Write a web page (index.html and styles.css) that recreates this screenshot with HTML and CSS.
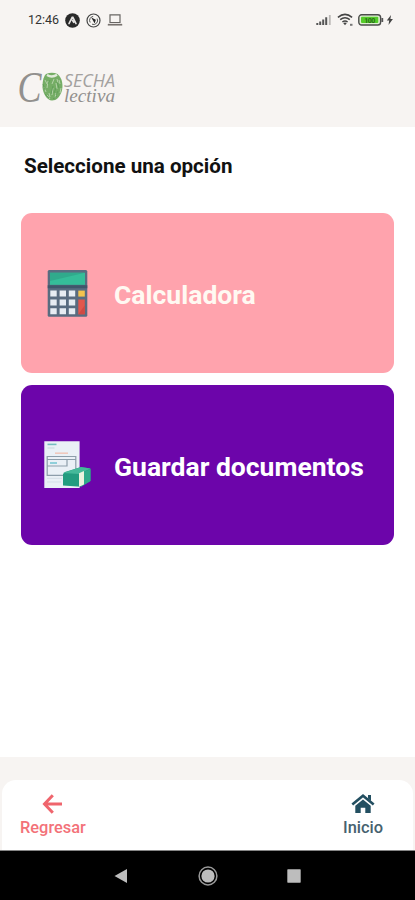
FILE: index.html
```html
<!DOCTYPE html>
<html lang="es">
<head>
<meta charset="utf-8">
<meta name="viewport" content="width=device-width, initial-scale=1">
<title>Cosecha Colectiva</title>
<link rel="stylesheet" href="styles.css">
</head>
<body>
<div class="app">
  <header class="header">
    <div class="status">
      <div class="status-left">
        <span class="clock">12:46</span>
        <svg width="15" height="15" viewBox="0 0 15 15"><circle cx="7.5" cy="7.5" r="7.3" fill="#292929"/><path d="M4 10.6 7.2 4.3h.7L11 10.6M7.5 7.3l1.2 2.1" fill="none" stroke="#e5e3e2" stroke-width="1.6" stroke-linecap="round"/></svg>
        <svg width="15" height="15" viewBox="0 0 15 15"><circle cx="7.5" cy="7.5" r="6.5" fill="#f7f5f3" stroke="#444" stroke-width="1.2"/><path d="M4.2 9.5a4 4 0 0 1 3-6.1M6 11.2a4 4 0 0 0 5.1-5.6" fill="none" stroke="#555" stroke-width="1"/><path d="M5.3 4.5 9.8 6.8 8.7 10.4 7 7.6Z" fill="#222"/></svg>
        <svg width="16" height="14" viewBox="0 0 16 14"><path d="M3 1.8h10v7.7H3Z" fill="none" stroke="#686563" stroke-width="1.2"/><path d="M.8 11.7h14.4" stroke="#77716e" stroke-width="1.7"/></svg>
      </div>
      <div class="status-right">
        <svg width="16" height="12" viewBox="0 0 16 12"><path d="M1.3 11V9M4.2 11V7.6M7.2 11V5.5M10.2 11V3.3" stroke="#555" stroke-width="2"/><path d="M13.8 11V1" stroke="#bbb8b6" stroke-width="1.8"/></svg>
        <svg width="17" height="14" viewBox="0 0 17 14"><path d="M.9 4.3Q8 -1.6 15.1 4.3M3.2 6.7q4.8-3.9 9.6 0M5.4 9q2.6-2 5.2 0" fill="none" stroke="#444" stroke-width="1.5"/><path d="m6.2 10 1.8 2.2L9.8 10Q8 8.9 6.2 10Z" fill="#444"/><path d="M13 11.8h2.5" stroke="#777" stroke-width="2"/></svg>
        <svg width="26" height="12" viewBox="0 0 26 12"><rect x=".8" y=".8" width="21.8" height="10.2" rx="2.8" fill="#dff0d3" stroke="#4c4c4c" stroke-width="1.4"/><rect x="3" y="2.7" width="17.3" height="6.4" rx="1" fill="#55cc29"/><path d="M24.3 4v4" stroke="#555" stroke-width="1.8"/><text x="6.2" y="8.6" class="battery-text" textLength="11">100</text></svg>
        <svg width="8" height="12" viewBox="0 0 8 12"><path d="M5 1 .8 6.6h2.4L2.5 11l4.4-6H4.4Z" fill="#444"/></svg>
      </div>
    </div>
    <svg class="logo" width="114" height="64" viewBox="10 56 114 64" role="img" aria-label="Cosecha Colectiva">
      <text class="logo-c" x="17.5" y="101.5" textLength="24" lengthAdjust="spacingAndGlyphs">C</text>
      <path d="M46 74q6-2.6 11.5 0c5 4 6 12 4 18-2 5-5 8.5-9.5 8.5-5 0-9-7-9.5-13 0-5 .5-10.500 3.500-13.500Z" fill="#75ad65"/>
      <path d="M47 75q5 3 10-.2" fill="none" stroke="#e2eadb" stroke-width="2.4"/>
      <path d="m45 80 2 4m-3 3 2 5m1-4 1-7m2 18-3-4m5 0 1-7m-1-4 2-5m2 4 1 6m-1 4-1 5m4-18 1 4m1 4-1 5m-3-14 1 4M49 93l1 4" stroke="#b4d2a8" stroke-width="1"/>
      <path d="m43 84 2 6m5-10-2 4m5 2-2 8m6-12 2 6m-5 5 2-5m2 3-2 4M45 94l4 4m4 1 4-3" stroke="#5c9a56" stroke-width=".8" fill="none"/>
      <text class="logo-top" x="64" y="86.500" textLength="51" lengthAdjust="spacingAndGlyphs">SECHA</text>
      <text class="logo-bottom" x="64" y="101.5" textLength="51" lengthAdjust="spacingAndGlyphs">lectiva</text>
    </svg>
  </header>

  <main class="main">
    <h1 class="title">Seleccione una opción</h1>
    <a class="card card-pink">
      <svg class="card-icon" width="50" height="50" viewBox="0 0 50 50">
        <rect x="4.7" y="2" width="39.6" height="46.7" rx="1.5" fill="#596c80"/>
        <path d="M4.7 17.3h39.6v3H4.7Z" fill="#40566b"/>
        <rect x="7" y="4.8" width="35" height="12" fill="#35bd99"/>
        <path d="M7 4.8h35L7 13Z" fill="#30aa8c"/>
        <path d="M7.3 22.6h6.4v6H7.3Zm9.3 0H23v6h-6.4Zm9.2 0h6.4v6h-6.4ZM7.3 31.5h6.4v6H7.3Zm9.3 0H23v6h-6.4Zm9.2 0h6.4v6h-6.4ZM7.3 40.3h6.4v6H7.3Zm9.3 0H23v6h-6.4Zm9.2 0h6.4v6h-6.4Z" fill="#e7edf3"/>
        <path d="M35.3 22.6h6.5v6h-6.5Z" fill="#f3c34e"/>
        <path d="M35.3 31.5h6.5v14.8h-6.5Z" fill="#e2574c"/>
        <path d="m35.3 46.3 6.5-9v9Z" fill="#cf4a43"/>
      </svg>
      <span class="card-label">Calculadora</span>
    </a>
    <a class="card card-purple">
      <svg class="card-icon" width="50" height="50" viewBox="0 0 50 50">
        <path d="M1.3 1.3h35.3v46.6H1.3Z" fill="#eaf0f6"/>
        <path d="M4.5 4.4h9" stroke="#76bcc0" stroke-width="1.6"/>
        <path d="M4.5 8h7" stroke="#ccdce3" stroke-width="1.2"/>
        <path d="M12 13.2h13" stroke="#efc8bd" stroke-width="1.6"/>
        <path d="M4.2 16.5h28.6v18.8H4.2Zm0 3h28.6M24 19.5v6.500H4.2" fill="none" stroke="#8d9daa" stroke-width="1.2"/>
        <path d="M7 23h7" stroke="#70c4d1" stroke-width="1.5"/>
        <path d="M4 38.3h15M4 42h14" stroke="#d5dfe8"/>
        <path d="m20 34 2-2 16-5 9.5 1.5V41L38 46.8 20 45.500Z" fill="#239c80"/>
        <path d="m20 33 18-6 9.5 1.5L36 34Z" fill="#45b99a"/>
        <path d="M38 33.2 47.5 29v12L38 46.8Z" fill="#31aa8b"/>
        <path d="m36 33.300 5-2.300V44.500l-5 2.300Z" fill="#edf3df"/>
      </svg>
      <span class="card-label">Guardar documentos</span>
    </a>
  </main>

  <footer class="tab-area">
    <nav class="tabs">
      <a class="tab tab-back">
        <svg width="22" height="20" viewBox="0 0 22 20"><path d="M20 10H3M10.8 1.2 2.5 10l8.3 8.8" fill="none" stroke="currentColor" stroke-width="3"/></svg>
        <span>Regresar</span>
      </a>
      <a class="tab tab-home">
        <svg width="24" height="20" viewBox="0 0 24 20"><path d="M1.3 10.500 12 1.700l10.700 8.800" fill="none" stroke="currentColor" stroke-width="2.6"/><path d="M17 1h3v6l-3-2.5ZM4.300 11.700 12 5.400l7.700 6.300V19h-5.400v-5.300H9.700V19H4.300Z" fill="currentColor"/></svg>
        <span>Inicio</span>
      </a>
    </nav>
  </footer>
  <div class="system-nav">
    <svg width="14" height="16" viewBox="0 0 14 16"><path d="M.5 8 13 1v14Z" fill="#bdbdbd"/></svg>
    <svg width="20" height="20" viewBox="0 0 20 20"><circle cx="10" cy="10" r="8.9" fill="none" stroke="#999" stroke-width="1.5"/><circle cx="10" cy="10" r="6.6" fill="#bdbdbd"/></svg>
    <svg width="14" height="14" viewBox="0 0 14 14"><rect x=".3" y=".3" width="13.4" height="13.4" rx=".6" fill="#bdbdbd"/></svg>
  </div>
</div>
</body>
</html>
```
FILE: styles.css
```css
* { box-sizing: border-box; }
body { margin: 0; background: #fff; font-family: Roboto, "Liberation Sans", sans-serif; }
svg { display: block; flex: none; }
.app { width: 415px; height: 900px; display: flex; flex-direction: column; overflow: hidden; }
.header { height: 127px; background: #f7f4f2; flex: none; }
.status { height: 40px; display: flex; justify-content: space-between; align-items: center; padding: 0 21px 0 28px; }
.status-left { display: flex; align-items: center; gap: 6px; }
.clock { width: 31px; font-size: 12.5px; line-height: 16px; color: #333; white-space: nowrap; }
.status-right { display: flex; align-items: center; gap: 5px; }
.status-right svg:nth-child(3) { margin-left: -1px; }
.status-right svg:last-child { margin-left: -3px; }
.battery-text { font-size: 7px; font-weight: 700; fill: #286b1a; }
.logo { margin: 16px 0 0 10px; }
.logo-c { font: italic 44px "Liberation Serif", serif; fill: #92908e; }
.logo-top { font: italic 17.500px "Open Sans", sans-serif; fill: #a3a19f; }
.logo-bottom { font: italic 18px "Liberation Serif", serif; fill: #92908e; }
.main { flex: 1; padding: 24px 21px 0; }
.title { margin: 0 0 32px 3px; font-size: 20.6px; line-height: 30px; font-weight: 700; color: #111; white-space: nowrap; }
.card { height: 160px; display: flex; align-items: center; border-radius: 11px; padding: 0 22px; color: #fff; }
.card + .card { margin-top: 12px; }
.card-pink { background: #ffa3ad; color: #fff9f2; }
.card-purple { background: #6c05aa; }
.card-icon { margin-right: 21px; }
.card-label { padding-top: 3px; font-size: 26.5px; line-height: 34px; font-weight: 700; white-space: nowrap; }
.tab-area { height: 93px; flex: none; padding: 23px 2px 0; background: #f7f4f2; }
.tabs { height: 70px; display: flex; justify-content: space-between; padding: 14px 30px 0 18px; background: #fff; border-radius: 14px 14px 0 0; }
.tab { display: flex; flex-direction: column; align-items: center; font-size: 16.4px; line-height: 20px; font-weight: 500; gap: 4px; }
.tab-back { color: #f37279; }
.tab-back svg { color: #ef656d; }
.tab-home { color: #46616e; }
.tab-home svg { color: #234f61; }
.system-nav { height: 50px; flex: none; display: flex; align-items: center; padding-left: 114px; background: #000; border-top: 1px solid #858585; }
.system-nav svg:nth-child(2) { margin-left: 70px; }
.system-nav svg:nth-child(3) { margin-left: 69px; }
```
